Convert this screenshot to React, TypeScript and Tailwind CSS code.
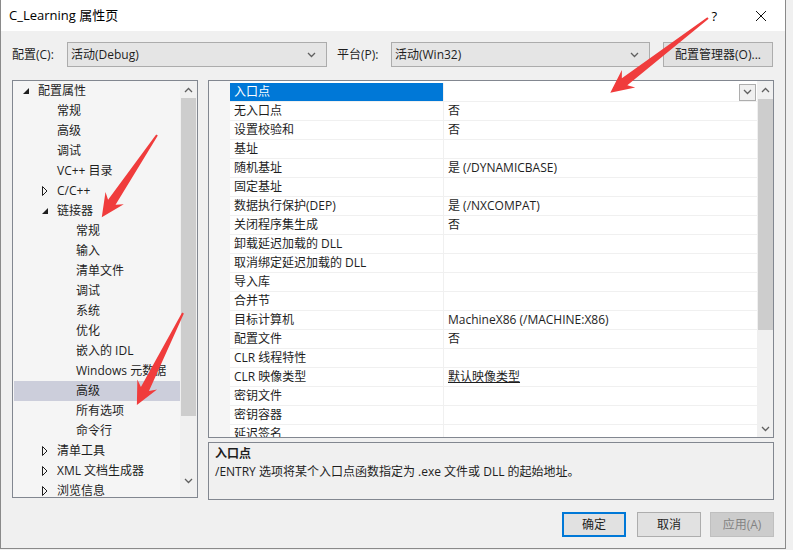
import React from "react";

type TreeItem = { label: string; level: number; toggle?: "open" | "closed"; selected?: boolean };

const treeItems: TreeItem[] = [
  { label: "配置属性", level: 0, toggle: "open" },
  { label: "常规", level: 1 },
  { label: "高级", level: 1 },
  { label: "调试", level: 1 },
  { label: "VC++ 目录", level: 1 },
  { label: "C/C++", level: 1, toggle: "closed" },
  { label: "链接器", level: 1, toggle: "open" },
  { label: "常规", level: 2 },
  { label: "输入", level: 2 },
  { label: "清单文件", level: 2 },
  { label: "调试", level: 2 },
  { label: "系统", level: 2 },
  { label: "优化", level: 2 },
  { label: "嵌入的 IDL", level: 2 },
  { label: "Windows 元数据", level: 2 },
  { label: "高级", level: 2, selected: true },
  { label: "所有选项", level: 2 },
  { label: "命令行", level: 2 },
  { label: "清单工具", level: 1, toggle: "closed" },
  { label: "XML 文档生成器", level: 1, toggle: "closed" },
  { label: "浏览信息", level: 1, toggle: "closed" },
];

const indent = ["pl-[6px]", "pl-[25px]", "pl-[44px]"];

const props: { name: string; value?: string; underline?: boolean }[] = [
  { name: "入口点" },
  { name: "无入口点", value: "否" },
  { name: "设置校验和", value: "否" },
  { name: "基址" },
  { name: "随机基址", value: "是 (/DYNAMICBASE)" },
  { name: "固定基址" },
  { name: "数据执行保护(DEP)", value: "是 (/NXCOMPAT)" },
  { name: "关闭程序集生成", value: "否" },
  { name: "卸载延迟加载的 DLL" },
  { name: "取消绑定延迟加载的 DLL" },
  { name: "导入库" },
  { name: "合并节" },
  { name: "目标计算机", value: "MachineX86 (/MACHINE:X86)" },
  { name: "配置文件", value: "否" },
  { name: "CLR 线程特性" },
  { name: "CLR 映像类型", value: "默认映像类型", underline: true },
  { name: "密钥文件" },
  { name: "密钥容器" },
  { name: "延迟签名" },
];

function Chevron({ up = false, className = "" }: { up?: boolean; className?: string }) {
  return (
    <svg width="9" height="6" viewBox="0 0 9 6" className={className}>
      <polyline
        points={up ? "1,5 4.5,1.5 8,5" : "1,1 4.5,4.5 8,1"}
        fill="none"
        stroke="#606060"
        strokeWidth="1.3"
      />
    </svg>
  );
}

function Combo({ text, width }: { text: string; width: string }) {
  return (
    <div className={`${width} h-[25px] bg-[#e5e5e5] border border-[#acacac] flex items-center pl-[3px] pr-[10px]`}>
      <span className="flex-1">{text}</span>
      <Chevron />
    </div>
  );
}

// red annotation arrow, drawn along x then rotated into place
function Arrow({ x, y, len, angle }: { x: number; y: number; len: number; angle: number }) {
  const L = len;
  const pts = `0,-1 ${L - 18},-4.5 ${L - 23},-11 ${L},0 ${L - 23},11 ${L - 18},4.5 0,1`;
  return <polygon points={pts} fill="#f03c3c" transform={`translate(${x} ${y}) rotate(${angle})`} />;
}

export default function App() {
  return (
    <div className="relative w-[793px] h-[550px] overflow-hidden bg-[#f0f0f0] text-[12px] text-[#1e1e1e] font-['Open_Sans','Noto_Sans_CJK_SC',sans-serif]">
      <div className="w-[786px] h-[549px] bg-[#f0f0f0] border-l border-r border-b border-[#8a8a8a] flex flex-col">
        {/* title bar */}
        <div className="h-[31px] bg-white flex items-center pl-[8px]">
          <span className="flex-1 text-[13px] text-black">C_Learning 属性页</span>
          <span className="text-[13px] text-black mr-[38px] mt-[3px]">?</span>
          <svg width="12" height="12" viewBox="0 0 12 12" className="mr-[18px]">
            <path d="M1 1 L11 11 M11 1 L1 11" stroke="#111" strokeWidth="1" />
          </svg>
        </div>

        {/* config row */}
        <div className="flex items-center pl-[11px] mt-[11px] h-[25px]">
          <span className="w-[55px]">配置(C):</span>
          <Combo text="活动(Debug)" width="w-[260px]" />
          <span className="w-[54px] ml-[10px]">平台(P):</span>
          <Combo text="活动(Win32)" width="w-[259px]" />
          <div className="ml-[13px] w-[110px] h-[25px] bg-[#e1e1e1] border border-[#adadad] flex items-center justify-center">
            配置管理器(O)...
          </div>
        </div>

        {/* main */}
        <div className="flex mt-[13px] pl-[11px] gap-[10px]">
          {/* tree */}
          <div className="w-[186px] h-[418px] border border-[#828790] bg-[#f5f5f5] flex overflow-hidden">
            <div className="flex-1 pl-[1px]">
              {treeItems.map((t, i) => (
                <div
                  key={i}
                  className={`h-[20px] flex items-center ${indent[t.level]} ${t.selected ? "bg-[#cccedb]" : ""}`}
                >
                  <span className="w-[12px] h-[20px] flex items-center justify-center">
                    {t.toggle === "open" && (
                      <svg width="6" height="6" viewBox="0 0 6 6">
                        <polygon points="6,0 6,6 0,6" fill="#1e1e1e" />
                      </svg>
                    )}
                    {t.toggle === "closed" && (
                      <svg width="6" height="10" viewBox="0 0 6 10">
                        <polygon points="0.5,0.5 5,5 0.5,9.5" fill="none" stroke="#1e1e1e" strokeWidth="1" />
                      </svg>
                    )}
                  </span>
                  <span className="ml-[6px] whitespace-nowrap">{t.label}</span>
                </div>
              ))}
            </div>
            <div className="w-[17px] bg-[#f0f0f0] flex flex-col items-center">
              <div className="h-[17px] flex items-center justify-center">
                <Chevron up />
              </div>
              <div className="w-[15px] h-[318px] bg-[#cdcdcd]" />
              <div className="flex-1" />
              <div className="h-[17px] mb-[8px] flex items-center justify-center">
                <Chevron />
              </div>
            </div>
          </div>

          {/* right column */}
          <div className="w-[566px] flex flex-col gap-[4px]">
            <div className="h-[358px] border border-[#828790] bg-white flex overflow-hidden">
              <div className="w-[21px] bg-[#f5f5f5]" />
              <div className="flex-1 pt-[2px]">
                {props.map((p, i) => (
                  <div key={i} className="h-[19px] flex border-b border-[#f0f0f0]">
                    <div
                      className={`w-[214px] pl-[4px] flex items-center border-r border-[#f0f0f0] ${
                        i === 0 ? "bg-[#0078d7] text-white" : ""
                      }`}
                    >
                      {p.name}
                    </div>
                    <div className="flex-1 pl-[4px] flex items-center">
                      <span className={`flex-1 ${p.underline ? "underline" : ""}`}>{p.value ?? ""}</span>
                      {i === 0 && (
                        <div className="w-[17px] h-[17px] mr-[1px] border border-[#adadad] bg-[#f0f0f0] flex items-center justify-center">
                          <Chevron />
                        </div>
                      )}
                    </div>
                  </div>
                ))}
              </div>
              <div className="w-[16px] bg-[#f0f0f0] flex flex-col items-center">
                <div className="h-[18px] flex items-center justify-center">
                  <Chevron up />
                </div>
                <div className="w-[15px] h-[231px] bg-[#cdcdcd]" />
                <div className="flex-1" />
                <div className="h-[17px] flex items-center justify-center">
                  <Chevron />
                </div>
              </div>
            </div>

            <div className="h-[58px] border border-[#828790] bg-[#f0f0f0] px-[6px] pt-[2px]">
              <div className="font-bold leading-[18px]">入口点</div>
              <div className="leading-[18px]">/ENTRY 选项将某个入口点函数指定为 .exe 文件或 DLL 的起始地址。</div>
            </div>
          </div>
        </div>

        {/* buttons */}
        <div className="flex justify-end pr-[11px] mt-[12px]">
          <div className="w-[64px] h-[25px] border-2 border-[#0078d7] bg-[#e1e1e1] flex items-center justify-center">
            确定
          </div>
          <div className="ml-[11px] w-[64px] h-[25px] border border-[#adadad] bg-[#e1e1e1] flex items-center justify-center">
            取消
          </div>
          <div className="ml-[9px] w-[64px] h-[25px] border border-[#bfbfbf] bg-[#cccccc] text-[#838383] flex items-center justify-center">
            应用(A)
          </div>
        </div>
      </div>

      {/* screenshot annotations */}
      <svg className="absolute inset-0 pointer-events-none" width="793" height="550">
        <Arrow x={708} y={18} len={123} angle={142.6} />
        <Arrow x={157} y={135} len={99} angle={123.9} />
        <Arrow x={183} y={313} len={103} angle={116.6} />
      </svg>
    </div>
  );
}
